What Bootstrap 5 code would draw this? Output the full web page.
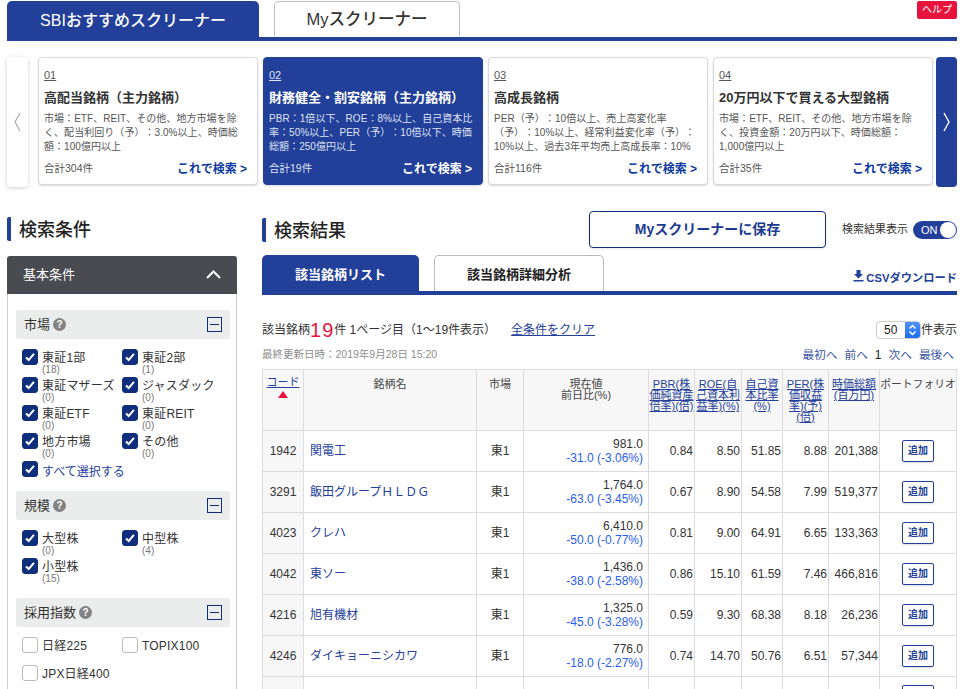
<!DOCTYPE html>
<html lang="ja">
<head>
<meta charset="utf-8">
<title>スクリーナー</title>
<link href="https://cdn.jsdelivr.net/npm/bootstrap@5.3.0/dist/css/bootstrap.min.css" rel="stylesheet">
<style>
html,body{height:689px;overflow:hidden}
body{font-family:"Liberation Sans","Noto Sans CJK JP",sans-serif;color:#333;background:#fff;font-size:12px;padding:0 19px 0 7px;text-spacing-trim:space-all}
a{color:#24409a}
.toptabs{position:relative;border-bottom:4px solid #223f99;margin-top:1px;margin-bottom:16px;height:40px}
.ttab{height:40px;width:252px;background:#223f99;color:#fff;font-size:16px;font-weight:500;border-radius:5px 5px 0 0;display:flex;align-items:center;justify-content:center}
.ttab-off{height:35px;width:186px;margin-left:15px;background:#fff;color:#333;border:1px solid #bbb;border-bottom:0;font-size:16.5px}
.helpbadge{position:absolute;right:0;top:0;width:40px;height:18px;background:#e8133c;color:#fff;font-size:10px;border-radius:2px;line-height:18px;text-align:center}
.slider{height:130px;gap:5px;margin-bottom:30px}
.arrow-l{width:21px;margin-right:5px;background:#fff;border-radius:4px;box-shadow:0 1px 4px rgba(0,0,0,.2);height:130px}
.arrow-r{width:21px;margin-left:-2px;background:#223f99;border-radius:4px;height:130px}
.scard{width:220px;height:128px;border:1px solid #d9d9d9;border-radius:4px;box-shadow:0 1px 2px rgba(0,0,0,.15);padding:10px 5px 0;background:#fff;color:#555}
.scard-on{background:#223f99;border-color:#223f99;color:#dfe4f2}
.snum{font-size:11px;text-decoration:underline;line-height:14px;height:14px}
.stitle{font-size:13px;font-weight:700;color:#333;line-height:18px;margin-top:7px;white-space:nowrap}
.scard-on .stitle,.scard-on .sgo{color:#fff}
.sdesc{font-size:10px;line-height:14px;height:42px;margin-top:5px;white-space:nowrap;letter-spacing:.05px}
.sfoot{margin-top:6px;font-size:10.5px;padding-right:5px}
.sgo{font-size:12px;font-weight:700;color:#0f3ba0}
.main{gap:25px}
.lcol{width:230px;flex:none}
.rcol{width:695px;flex:none}
.ptitle{border-left:4px solid #223f99;border-radius:2px;height:24px;line-height:26px;padding-left:8px;font-size:18px;font-weight:500;color:#222}
.phead{background:#4a4b50;color:#fff;height:38px;margin-top:15px;border-radius:3px 3px 0 0;padding:0 16px 1px 16px;font-size:13px}
.pbody{border:1px solid #ccc;border-top:0;padding:16px 6px 0 8px;height:400px}
.ghead{background:#ebeded;height:29px;border-radius:2px;padding:0 8px;font-size:13px;color:#333}
.qmark{width:13px;height:13px;border-radius:50%;background:#838383;color:#fff;font-size:10px;font-weight:700;line-height:13px;text-align:center;margin-left:3px}
.minusbox{width:15px;height:15px;border:1px solid #0f2f7d;position:relative}
.minusbox::after{content:"";position:absolute;left:2px;right:2px;top:6px;height:1px;background:#0f2f7d}
.cgrid{display:grid;grid-template-columns:100px 100px;padding:10px 0 0 6px;row-gap:0}
.citem{height:28px;display:flex;gap:4px;white-space:nowrap}
.form-check-input.cbx{width:16px;height:16px;margin:0;flex:none;border-radius:3px;border-color:#bbb}
.form-check-input.cbx:checked{background-color:#0f2f7d;border-color:#0f2f7d;background-image:url("data:image/svg+xml,%3csvg xmlns='http://www.w3.org/2000/svg' viewBox='0 0 16 16'%3e%3cpath d='M3.500 8.500l3 3 6-7' fill='none' stroke='%23fff' stroke-width='2.400'/%3e%3c/svg%3e")}
.clabel{font-size:12px;line-height:14px;padding-top:2px;color:#333;letter-spacing:.2px}
.ccount{display:block;font-size:10px;line-height:9px;color:#777;letter-spacing:0}
.allsel{font-size:12px;color:#24409a;padding-top:2px}
.gsp{margin-top:2px}
.gsp2{margin-top:12px}
.rhead{margin-top:-6px}
.savebtn{width:237px;height:37px;border:1px solid #0f2f7d;border-radius:4px;background:#fff;color:#1c3a8e;font-size:14px;font-weight:600;box-shadow:0 1px 3px rgba(0,0,0,.1)}
.togl{font-size:11px;color:#333;gap:5px;margin-left:16px}
.tswitch{width:44px;height:18px;background:#223f99;border-radius:9px;color:#fff;font-size:11px;line-height:18px;padding-left:8px;position:relative;display:block}
.tswitch::after{content:"";position:absolute;right:1px;top:1px;width:16px;height:16px;border-radius:50%;background:#fff}
.rtabs{border-bottom:4px solid #223f99;height:40px;margin-top:7px}
.rtab{width:157px;background:#223f99;color:#fff;font-size:13px;font-weight:700;border-radius:5px 5px 0 0;display:flex;align-items:center;justify-content:center;height:40px;margin-bottom:-4px}
.rtab-off{width:170px;height:36px;margin:0 0 0 15px;background:#fff;color:#222;border:1px solid #bbb;border-bottom:0;padding:2px 0 0}
.csv{font-size:11.25px;font-weight:600;color:#223f99;text-decoration:none;margin-left:auto;gap:2px;padding-top:15px;height:36px}
.hitline{margin-top:25px;font-size:12px;height:20px}
.hitnum{color:#e8133c;font-size:20px;line-height:20px;letter-spacing:1px}
.clearlink{margin-left:15px}
.fake-sel{width:45px;height:18px;border:1px solid #ccc;border-radius:4px;font-size:12px;color:#222;position:relative;padding-left:7px;line-height:16px;background:#fff;overflow:hidden;display:block}
.fake-sel svg{position:absolute;right:0;top:-1px;background:linear-gradient(#4f93f5,#1a6cf0)}
.metarow{margin-top:6px}
.updline{font-size:10.5px;color:#8e8e8e;height:17px;margin-top:1px}
.pager{font-size:11.7px;gap:7px;padding-right:3px}
.pager a{text-decoration:none;color:#3b55a5}
.pager b{font-weight:500;color:#222;font-size:12px}
.rtbl{table-layout:fixed;width:694px;border-collapse:collapse;font-size:12px;color:#333;margin-top:5px}
.rtbl th,.rtbl td{border:1px solid #dcdcdf;padding:0}
.rtbl th{background:#f7f7f7;font-weight:400;font-size:11px;line-height:11px;height:61px;vertical-align:top;text-align:center;padding-top:9px;color:#444}
.rtbl th a{display:block}
.rtbl th.c-sort{padding-top:7px}
.rtbl th.c-pf{white-space:nowrap;font-size:10.8px}
.rtbl td{height:41px;text-align:right;line-height:14px;vertical-align:middle;padding-right:1px}
.rtbl td.c-code{background:#f7f7f7;text-align:center;padding:0}
.rtbl td.c-name{text-align:left;padding-left:6px}
.rtbl td.c-name a{text-decoration:none}
.rtbl td.c-mkt{text-align:center;padding:0}
.rtbl td.c-price{padding-right:5px;line-height:14.5px}
.neg{color:#2a5df0;display:block}
.addbtn{display:inline-block;width:32px;height:22px;border:1px solid #223f99;border-radius:2px;color:#223f99;font-size:10px;font-weight:700;line-height:20px;text-align:center;box-shadow:0 1px 2px rgba(0,0,0,.15)}
.rtbl td.c-add{text-align:center;padding:0}
.uptri{width:0;height:0;border-left:5px solid transparent;border-right:5px solid transparent;border-bottom:7px solid #e8133c;display:block;margin:3px auto 0}
.w1{width:41px}.w2{width:173px}.w3{width:47px}.w4{width:125px}.w5{width:46px}.w6{width:47px}.w7{width:41px}.w8{width:46px}.w9{width:51px}.w10{width:77px}
</style>
</head>
<body>
<div class="toptabs d-flex align-items-start">
  <div class="ttab">SBIおすすめスクリーナー</div>
  <div class="ttab ttab-off">Myスクリーナー</div>
  <div class="helpbadge">ヘルプ</div>
</div>

<div class="slider d-flex align-items-start">
  <div class="arrow-l d-flex align-items-center justify-content-center">
    <svg width="9" height="20" viewBox="0 0 9 20"><path d="M7 1 2 10l5 9" fill="none" stroke="#aaa" stroke-width="1.2"/></svg>
  </div>
  <div class="scard">
    <div class="snum">01</div>
    <div class="stitle">高配当銘柄（主力銘柄）</div>
    <div class="sdesc">市場：ETF、REIT、その他、地方市場を除<br>く、配当利回り（予）：3.0%以上、時価総<br>額：100億円以上</div>
    <div class="sfoot d-flex justify-content-between align-items-center"><span>合計304件</span><span class="sgo">これで検索 &gt;</span></div>
  </div>
  <div class="scard scard-on">
    <div class="snum">02</div>
    <div class="stitle">財務健全・割安銘柄（主力銘柄）</div>
    <div class="sdesc">PBR：1倍以下、ROE：8%以上、自己資本比<br>率：50%以上、PER（予）：10倍以下、時価<br>総額：250億円以上</div>
    <div class="sfoot d-flex justify-content-between align-items-center"><span>合計19件</span><span class="sgo">これで検索 &gt;</span></div>
  </div>
  <div class="scard">
    <div class="snum">03</div>
    <div class="stitle">高成長銘柄</div>
    <div class="sdesc">PER（予）：10倍以上、売上高変化率<br>（予）：10%以上、経常利益変化率（予）：<br>10%以上、過去3年平均売上高成長率：10%</div>
    <div class="sfoot d-flex justify-content-between align-items-center"><span>合計116件</span><span class="sgo">これで検索 &gt;</span></div>
  </div>
  <div class="scard">
    <div class="snum">04</div>
    <div class="stitle">20万円以下で買える大型銘柄</div>
    <div class="sdesc">市場：ETF、REIT、その他、地方市場を除<br>く、投資金額：20万円以下、時価総額：<br>1,000億円以上</div>
    <div class="sfoot d-flex justify-content-between align-items-center"><span>合計35件</span><span class="sgo">これで検索 &gt;</span></div>
  </div>
  <div class="arrow-r d-flex align-items-center justify-content-center">
    <svg width="9" height="20" viewBox="0 0 9 20"><path d="M2 1l5 9-5 9" fill="none" stroke="#fff" stroke-width="1.4"/></svg>
  </div>
</div>

<div class="main d-flex align-items-start">
  <div class="lcol">
    <div class="ptitle">検索条件</div>
    <div class="phead d-flex align-items-center justify-content-between">
      <span>基本条件</span>
      <svg width="15" height="9" viewBox="0 0 15 9"><path d="M1 8l6.500-6.500L14 8" fill="none" stroke="#fff" stroke-width="2"/></svg>
    </div>
    <div class="pbody">
      <div class="ghead d-flex align-items-center"><span>市場</span><span class="qmark">?</span><span class="minusbox ms-auto"></span></div>
      <div class="cgrid">
        <div class="citem"><input class="form-check-input cbx" type="checkbox" checked><span class="clabel">東証1部<span class="ccount">(18)</span></span></div>
        <div class="citem"><input class="form-check-input cbx" type="checkbox" checked><span class="clabel">東証2部<span class="ccount">(1)</span></span></div>
        <div class="citem"><input class="form-check-input cbx" type="checkbox" checked><span class="clabel">東証マザーズ<span class="ccount">(0)</span></span></div>
        <div class="citem"><input class="form-check-input cbx" type="checkbox" checked><span class="clabel">ジャスダック<span class="ccount">(0)</span></span></div>
        <div class="citem"><input class="form-check-input cbx" type="checkbox" checked><span class="clabel">東証ETF<span class="ccount">(0)</span></span></div>
        <div class="citem"><input class="form-check-input cbx" type="checkbox" checked><span class="clabel">東証REIT<span class="ccount">(0)</span></span></div>
        <div class="citem"><input class="form-check-input cbx" type="checkbox" checked><span class="clabel">地方市場<span class="ccount">(0)</span></span></div>
        <div class="citem"><input class="form-check-input cbx" type="checkbox" checked><span class="clabel">その他<span class="ccount">(0)</span></span></div>
        <div class="citem"><input class="form-check-input cbx" type="checkbox" checked><span class="allsel">すべて選択する</span></div>
      </div>
      <div class="ghead d-flex align-items-center gsp"><span>規模</span><span class="qmark">?</span><span class="minusbox ms-auto"></span></div>
      <div class="cgrid">
        <div class="citem"><input class="form-check-input cbx" type="checkbox" checked><span class="clabel">大型株<span class="ccount">(0)</span></span></div>
        <div class="citem"><input class="form-check-input cbx" type="checkbox" checked><span class="clabel">中型株<span class="ccount">(4)</span></span></div>
        <div class="citem"><input class="form-check-input cbx" type="checkbox" checked><span class="clabel">小型株<span class="ccount">(15)</span></span></div>
      </div>
      <div class="ghead d-flex align-items-center gsp2"><span>採用指数</span><span class="qmark">?</span><span class="minusbox ms-auto"></span></div>
      <div class="cgrid">
        <div class="citem"><input class="form-check-input cbx" type="checkbox"><span class="clabel">日経225</span></div>
        <div class="citem"><input class="form-check-input cbx" type="checkbox"><span class="clabel">TOPIX100</span></div>
        <div class="citem"><input class="form-check-input cbx" type="checkbox"><span class="clabel">JPX日経400</span></div>
      </div>
    </div>
  </div>

  <div class="rcol">
    <div class="rhead d-flex align-items-center">
      <div class="ptitle me-auto">検索結果</div>
      <div class="savebtn d-flex align-items-center justify-content-center">Myスクリーナーに保存</div>
      <div class="togl d-flex align-items-center"><span>検索結果表示</span><span class="tswitch">ON</span></div>
    </div>
    <div class="rtabs d-flex">
      <div class="rtab">該当銘柄リスト</div>
      <div class="rtab rtab-off">該当銘柄詳細分析</div>
      <a class="csv d-flex align-items-start" href="#">
        <svg width="11" height="12" viewBox="0 0 11 12"><path d="M3.500 0h4v4H10L5.500 8.500 1 4h2.500zM.500 10h10v1.500H.500z" fill="#223f99"/></svg>
        CSVダウンロード
      </a>
    </div>
    <div class="hitline d-flex align-items-center">
      <span>該当銘柄</span><span class="hitnum">19</span><span>件 1ページ目（1〜19件表示）</span>
      <a class="clearlink" href="#">全条件をクリア</a>
      <span class="ms-auto d-flex align-items-center"><span class="fake-sel">50<svg width="15" height="18" viewBox="0 0 15 18"><path d="M4.500 7.500l3-3 3 3M4.500 10.500l3 3 3-3" fill="none" stroke="#fff" stroke-width="1.500"/></svg></span><span>件表示</span></span>
    </div>
    <div class="metarow d-flex align-items-center">
      <div class="updline">最終更新日時：2019年9月28日 15:20</div>
      <div class="pager ms-auto d-flex align-items-center"><a href="#">最初へ</a><a href="#">前へ</a><b>1</b><a href="#">次へ</a><a href="#">最後へ</a></div>
    </div>
    <table class="rtbl">
      <colgroup><col class="w1"><col class="w2"><col class="w3"><col class="w4"><col class="w5"><col class="w6"><col class="w7"><col class="w8"><col class="w9"><col class="w10"></colgroup>
      <thead><tr>
        <th class="c-sort"><a href="#">コード</a><span class="uptri"></span></th>
        <th>銘柄名</th>
        <th>市場</th>
        <th>現在値<br>前日比(%)</th>
        <th><a href="#">PBR(株価純資産倍率)(倍)</a></th>
        <th><a href="#">ROE(自己資本利益率)(%)</a></th>
        <th><a href="#">自己資本比率(%)</a></th>
        <th><a href="#">PER(株価収益率)(予)(倍)</a></th>
        <th><a href="#">時価総額(百万円)</a></th>
        <th class="c-pf">ポートフォリオ</th>
      </tr></thead>
      <tbody>
        <tr><td class="c-code">1942</td><td class="c-name"><a href="#">関電工</a></td><td class="c-mkt">東1</td><td class="c-price">981.0<span class="neg">-31.0 (-3.06%)</span></td><td>0.84</td><td>8.50</td><td>51.85</td><td>8.88</td><td>201,388</td><td class="c-add"><span class="addbtn">追加</span></td></tr>
        <tr><td class="c-code">3291</td><td class="c-name"><a href="#">飯田グループＨＬＤＧ</a></td><td class="c-mkt">東1</td><td class="c-price">1,764.0<span class="neg">-63.0 (-3.45%)</span></td><td>0.67</td><td>8.90</td><td>54.58</td><td>7.99</td><td>519,377</td><td class="c-add"><span class="addbtn">追加</span></td></tr>
        <tr><td class="c-code">4023</td><td class="c-name"><a href="#">クレハ</a></td><td class="c-mkt">東1</td><td class="c-price">6,410.0<span class="neg">-50.0 (-0.77%)</span></td><td>0.81</td><td>9.00</td><td>64.91</td><td>6.65</td><td>133,363</td><td class="c-add"><span class="addbtn">追加</span></td></tr>
        <tr><td class="c-code">4042</td><td class="c-name"><a href="#">東ソー</a></td><td class="c-mkt">東1</td><td class="c-price">1,436.0<span class="neg">-38.0 (-2.58%)</span></td><td>0.86</td><td>15.10</td><td>61.59</td><td>7.46</td><td>466,816</td><td class="c-add"><span class="addbtn">追加</span></td></tr>
        <tr><td class="c-code">4216</td><td class="c-name"><a href="#">旭有機材</a></td><td class="c-mkt">東1</td><td class="c-price">1,325.0<span class="neg">-45.0 (-3.28%)</span></td><td>0.59</td><td>9.30</td><td>68.38</td><td>8.18</td><td>26,236</td><td class="c-add"><span class="addbtn">追加</span></td></tr>
        <tr><td class="c-code">4246</td><td class="c-name"><a href="#">ダイキョーニシカワ</a></td><td class="c-mkt">東1</td><td class="c-price">776.0<span class="neg">-18.0 (-2.27%)</span></td><td>0.74</td><td>14.70</td><td>50.76</td><td>6.51</td><td>57,344</td><td class="c-add"><span class="addbtn">追加</span></td></tr>
        <tr><td class="c-code"></td><td class="c-name"></td><td class="c-mkt"></td><td class="c-price">5,710.0<span class="neg"></span></td><td></td><td></td><td></td><td></td><td></td><td class="c-add"><span class="addbtn"></span></td></tr>
      </tbody>
    </table>
  </div>
</div>
<script src="https://cdn.jsdelivr.net/npm/bootstrap@5.3.0/dist/js/bootstrap.bundle.min.js"></script>
</body>
</html>
